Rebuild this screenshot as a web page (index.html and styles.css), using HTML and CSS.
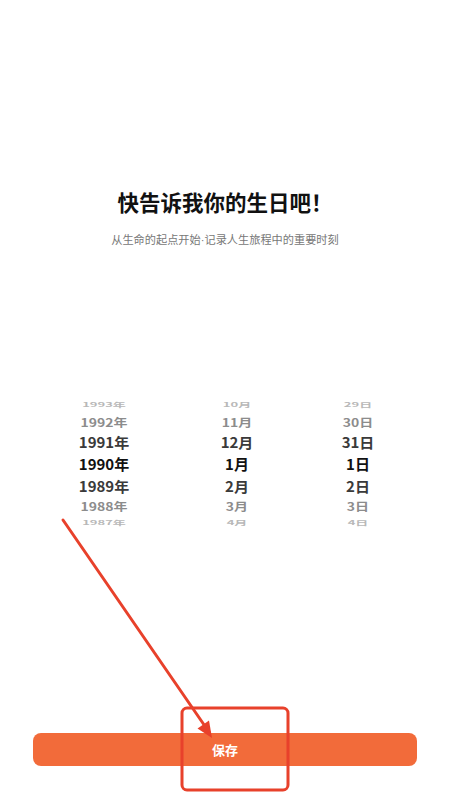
FILE: index.html
```html
<!DOCTYPE html>
<html lang="zh-CN">
<head>
<meta charset="utf-8">
<title>生日</title>
<link rel="stylesheet" href="styles.css">
</head>
<body>
<div class="page">
  <h1 class="title">快告诉我你的生日吧！</h1>
  <p class="subtitle">从生命的起点开始<span class="dot">·</span>记录人生旅程中的重要时刻</p>

  <div class="picker">
    <div class="col col-year">
      <div class="row r3">1993年</div>
      <div class="row r2">1992年</div>
      <div class="row r1">1991年</div>
      <div class="row r0">1990年</div>
      <div class="row r1">1989年</div>
      <div class="row r2">1988年</div>
      <div class="row r3">1987年</div>
    </div>
    <div class="col col-month">
      <div class="row r3">10月</div>
      <div class="row r2">11月</div>
      <div class="row r1">12月</div>
      <div class="row r0">1月</div>
      <div class="row r1">2月</div>
      <div class="row r2">3月</div>
      <div class="row r3">4月</div>
    </div>
    <div class="col col-day">
      <div class="row r3">29日</div>
      <div class="row r2">30日</div>
      <div class="row r1">31日</div>
      <div class="row r0">1日</div>
      <div class="row r1">2日</div>
      <div class="row r2">3日</div>
      <div class="row r3">4日</div>
    </div>
  </div>

  <button class="save">保存</button>

  <svg class="annot" width="450" height="800" viewBox="0 0 450 800" aria-hidden="true">
    <line x1="63" y1="520" x2="209" y2="732" stroke="#E8412B" stroke-width="3" stroke-linecap="round"/>
    <polygon points="212,738 197.5,728.5 209,720.5" fill="#E8412B"/>
    <rect x="182" y="708" width="106" height="82" rx="5" ry="5" fill="none" stroke="#E8412B" stroke-width="3"/>
  </svg>
</div>
</body>
</html>
```

FILE: styles.css
```css
html, body {
  margin: 0;
  padding: 0;
  background: #ffffff;
}

body {
  font-family: "Noto Sans CJK SC", "Noto Sans", "Liberation Sans", sans-serif;
}

.page {
  position: relative;
  width: 450px;
  height: 800px;
  display: flex;
  flex-direction: column;
  align-items: center;
  overflow: hidden;
}

.title {
  margin: 187px 0 0 0;
  font-size: 21.5px;
  line-height: 30px;
  font-weight: 700;
  color: #111111;
}

.subtitle {
  margin: 14px 0 0 0;
  font-size: 11.2px;
  line-height: 16px;
  color: #777777;
}

.dot {
  font-family: "Liberation Sans", sans-serif;
}

.picker {
  margin-top: 150px;
  align-self: flex-start;
  margin-left: 40px;
  display: grid;
  grid-template-columns: 128px 138px 104px;
  height: 131px;
  overflow: hidden;
}

.col {
  display: flex;
  flex-direction: column;
  align-items: center;
}

.row {
  font-size: 15px;
  font-weight: 700;
  line-height: 22px;
  height: 22px;
  white-space: nowrap;
  display: flex;
  align-items: center;
  justify-content: center;
}

.r0 {
  color: #111111;
}

.r1 {
  color: #3a3a3a;
  transform: scaleY(0.94);
}

.r2 {
  color: #8c8c8c;
  height: 18.5px;
  transform: scaleY(0.8);
  font-size: 14px;
}

.r3 {
  color: #b8b8b8;
  height: 14.5px;
  transform: scaleY(0.45);
  font-size: 13px;
}

.save {
  margin-top: auto;
  margin-bottom: 34px;
  width: 384px;
  height: 33px;
  border: none;
  border-radius: 8px;
  background: #F26B3A;
  color: #ffffff;
  font-family: "Noto Sans CJK SC", "Noto Sans", sans-serif;
  font-size: 13px;
  font-weight: 700;
  padding: 0;
}

.annot {
  position: absolute;
  left: 0;
  top: 0;
  pointer-events: none;
}
```
